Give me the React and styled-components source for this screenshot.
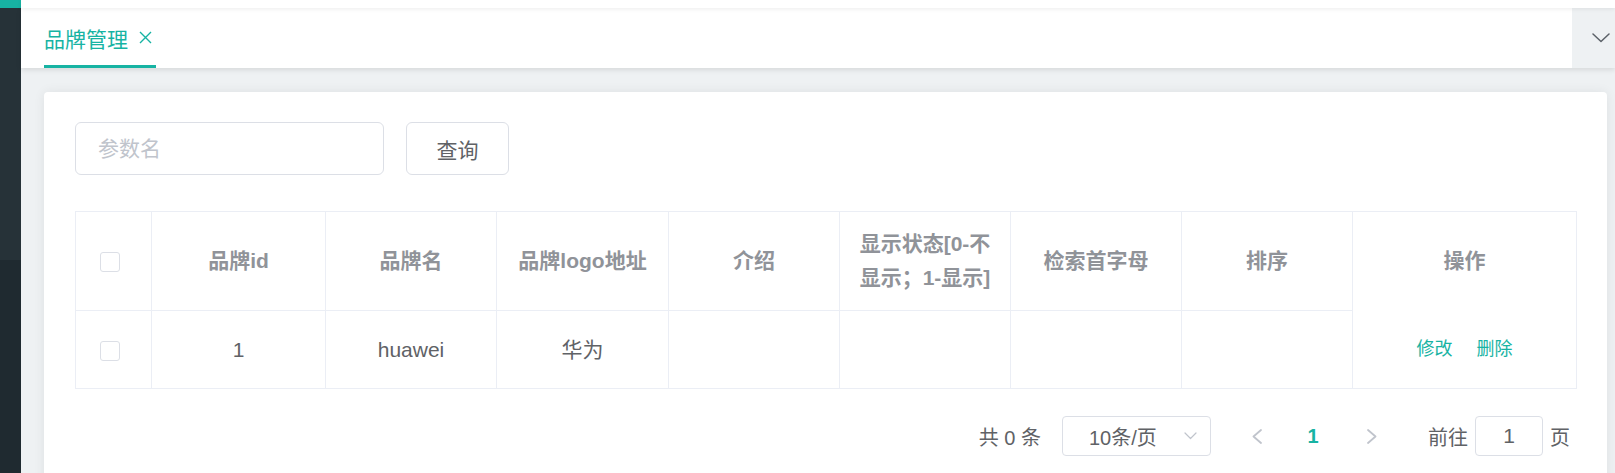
import React from 'react';
import styled, { createGlobalStyle } from 'styled-components';

const PRIMARY = '#17b3a3';
const BORDER = '#ebeef5';
const TEXT = '#606266';

const GlobalStyle = createGlobalStyle`
  html, body { margin: 0; padding: 0; height: 100%; overflow: hidden; background: #eef1f3; }
  body { font-family: "Liberation Sans", "Noto Sans CJK SC", sans-serif; }
  *, *::before, *::after { box-sizing: border-box; }
`;

const Layout = styled.div`
  display: flex;
  height: 473px;
`;

const Sidebar = styled.aside`
  width: 21px;
  flex: none;
  display: flex;
  flex-direction: column;
`;

const SideBlock = styled.div`
  flex: ${(p) => (p.$h ? `0 0 ${p.$h}px` : '1')};
  background: ${(p) => p.$bg};
`;

const Main = styled.div`
  flex: 1;
  min-width: 0;
  display: flex;
  flex-direction: column;
  background: #eef1f3;
`;

const TopStrip = styled.div`
  height: 8px;
  flex: none;
  background: #fff;
  position: relative;
  z-index: 2;
  box-shadow: 0 1px 4px rgba(0, 0, 0, 0.08);
`;

const TabBar = styled.div`
  height: 60px;
  flex: none;
  display: flex;
  background: #fff;
  position: relative;
  z-index: 1;
  box-shadow: 0 2px 5px rgba(0, 0, 0, 0.1);
`;

const TabList = styled.div`
  flex: 1;
  display: flex;
  padding-left: 23px;
`;

const TabItem = styled.div`
  display: flex;
  align-items: center;
  height: 100%;
  padding: 2px 4px 0 0;
  color: ${PRIMARY};
  font-size: 21px;
  border-bottom: 3px solid ${(p) => (p.$active ? PRIMARY : 'transparent')};
`;

const CloseIcon = styled.svg`
  margin-left: 11px;
  flex: none;
`;

const TabTools = styled.div`
  width: 43px;
  flex: none;
  display: flex;
  align-items: center;
  padding-left: 20px;
  background: #eef1f3;
`;

const Content = styled.div`
  flex: 1;
  padding: 24px 8px 0 23px;
`;

const Card = styled.div`
  background: #fff;
  border-radius: 4px;
  box-shadow: 0 0 12px rgba(0, 0, 0, 0.07);
  padding: 30px 31px 40px;
`;

const SearchForm = styled.div`
  display: flex;
  gap: 22px;
  margin-bottom: 36px;
`;

const SearchInput = styled.input`
  width: 309px;
  height: 53px;
  border: 1px solid #dcdfe6;
  border-radius: 6px;
  padding: 0 22px;
  font-family: inherit;
  font-size: 21px;
  color: ${TEXT};
  outline: none;
  &::placeholder { color: #c0c4cc; }
`;

const QueryButton = styled.button`
  width: 103px;
  height: 53px;
  border: 1px solid #dcdfe6;
  border-radius: 6px;
  background: #fff;
  font-family: inherit;
  font-size: 21px;
  color: ${TEXT};
  padding: 0;
`;

const Table = styled.table`
  width: 100%;
  table-layout: fixed;
  border-collapse: collapse;
  border: 1px solid ${BORDER};
  font-size: 21px;
`;

const Th = styled.th`
  height: 99px;
  padding: 0 12px;
  color: #909399;
  font-weight: bold;
  line-height: 34px;
  text-align: ${(p) => (p.$left ? 'left' : 'center')};
  padding-left: ${(p) => (p.$left ? '24px' : '12px')};
  border-right: 1px solid ${BORDER};
  border-bottom: ${(p) => (p.$noBottom ? 'none' : `1px solid ${BORDER}`)};
  vertical-align: middle;
`;

const Td = styled.td`
  height: 78px;
  padding: 0 12px;
  color: ${TEXT};
  line-height: 33px;
  text-align: ${(p) => (p.$left ? 'left' : 'center')};
  padding-left: ${(p) => (p.$left ? '24px' : '12px')};
  border-right: 1px solid ${BORDER};
  border-bottom: 1px solid ${BORDER};
  vertical-align: middle;
`;

const Checkbox = styled.span`
  display: inline-block;
  width: 20px;
  height: 20px;
  border: 1px solid #dcdfe6;
  border-radius: 3px;
  background: #fff;
  vertical-align: middle;
`;

const Ops = styled.div`
  display: flex;
  justify-content: center;
  gap: 24px;
`;

const LinkButton = styled.span`
  color: ${PRIMARY};
  font-size: 18px;
  line-height: 33px;
`;

const Pagination = styled.div`
  display: flex;
  justify-content: flex-end;
  align-items: center;
  margin-top: 27px;
  padding-right: 6px;
  height: 40px;
  font-size: 20px;
  color: ${TEXT};
`;

const Total = styled.span`
  margin-right: 21px;
  white-space: pre;
`;

const SizeSelect = styled.div`
  width: 149px;
  height: 40px;
  border: 1px solid #dcdfe6;
  border-radius: 4px;
  display: flex;
  align-items: center;
  justify-content: space-between;
  padding: 0 13px 0 26px;
`;

const NavButton = styled.div`
  width: ${(p) => p.$w}px;
  margin-left: ${(p) => p.$ml || 0}px;
  height: 40px;
  display: flex;
  align-items: center;
  justify-content: center;
`;

const PageNumber = styled.div`
  width: 60px;
  text-align: center;
  color: ${PRIMARY};
  font-weight: bold;
`;

const Jumper = styled.div`
  display: flex;
  align-items: center;
  margin-left: 27px;
  gap: 7px;
`;

const JumpInput = styled.div`
  width: 68px;
  height: 40px;
  border: 1px solid #dcdfe6;
  border-radius: 4px;
  display: flex;
  align-items: center;
  justify-content: center;
  font-size: 21px;
`;

const Chevron = ({ dir, w, h, color, sw = 1.6 }) => {
  const paths = {
    left: `M${w - 1} 1 L1.5 ${h / 2} L${w - 1} ${h - 1}`,
    right: `M1 1 L${w - 1.5} ${h / 2} L1 ${h - 1}`,
    down: `M1 1 L${w / 2} ${h - 1.5} L${w - 1} 1`,
  };
  return (
    <svg width={w} height={h} viewBox={`0 0 ${w} ${h}`} fill="none">
      <path d={paths[dir]} stroke={color} strokeWidth={sw} strokeLinecap="round" strokeLinejoin="round" />
    </svg>
  );
};

const columns = [76, 174, 171, 172, 171, 171, 171, 171, 224];

export default function App() {
  return (
    <>
      <GlobalStyle />
      <Layout>
        <Sidebar>
          <SideBlock $h={8} $bg={PRIMARY} />
          <SideBlock $h={252} $bg="#263238" />
          <SideBlock $bg="#1f2a30" />
        </Sidebar>
        <Main>
          <TopStrip />
          <TabBar>
            <TabList>
              <TabItem $active>
                品牌管理
                <CloseIcon width="13" height="13" viewBox="0 0 13 13">
                  <path d="M1 1 L12 12 M12 1 L1 12" stroke={PRIMARY} strokeWidth="1.4" />
                </CloseIcon>
              </TabItem>
            </TabList>
            <TabTools>
              <Chevron dir="down" w={18} h={10} color="#5b6168" sw={1.5} />
            </TabTools>
          </TabBar>
          <Content>
            <Card>
              <SearchForm>
                <SearchInput placeholder="参数名" />
                <QueryButton>查询</QueryButton>
              </SearchForm>
              <Table>
                <colgroup>
                  {columns.map((w, i) => (
                    <col key={i} style={{ width: w }} />
                  ))}
                </colgroup>
                <thead>
                  <tr>
                    <Th $left><Checkbox /></Th>
                    <Th>品牌id</Th>
                    <Th>品牌名</Th>
                    <Th>品牌logo地址</Th>
                    <Th>介绍</Th>
                    <Th>显示状态[0-不<br />显示；1-显示]</Th>
                    <Th>检索首字母</Th>
                    <Th>排序</Th>
                    <Th $noBottom>操作</Th>
                  </tr>
                </thead>
                <tbody>
                  <tr>
                    <Td $left><Checkbox /></Td>
                    <Td>1</Td>
                    <Td>huawei</Td>
                    <Td>华为</Td>
                    <Td />
                    <Td />
                    <Td />
                    <Td />
                    <Td>
                      <Ops>
                        <LinkButton>修改</LinkButton>
                        <LinkButton>删除</LinkButton>
                      </Ops>
                    </Td>
                  </tr>
                </tbody>
              </Table>
              <Pagination>
                <Total>共 0 条</Total>
                <SizeSelect>
                  <span>10条/页</span>
                  <Chevron dir="down" w={13} h={8} color="#c0c4cc" sw={1.2} />
                </SizeSelect>
                <NavButton $w={52} $ml={20}>
                  <Chevron dir="left" w={10} h={15} color="#c0c4cc" sw={1.8} />
                </NavButton>
                <PageNumber>1</PageNumber>
                <NavButton $w={58}>
                  <Chevron dir="right" w={10} h={15} color="#c0c4cc" sw={1.8} />
                </NavButton>
                <Jumper>
                  <span>前往</span>
                  <JumpInput>1</JumpInput>
                  <span>页</span>
                </Jumper>
              </Pagination>
            </Card>
          </Content>
        </Main>
      </Layout>
    </>
  );
}
